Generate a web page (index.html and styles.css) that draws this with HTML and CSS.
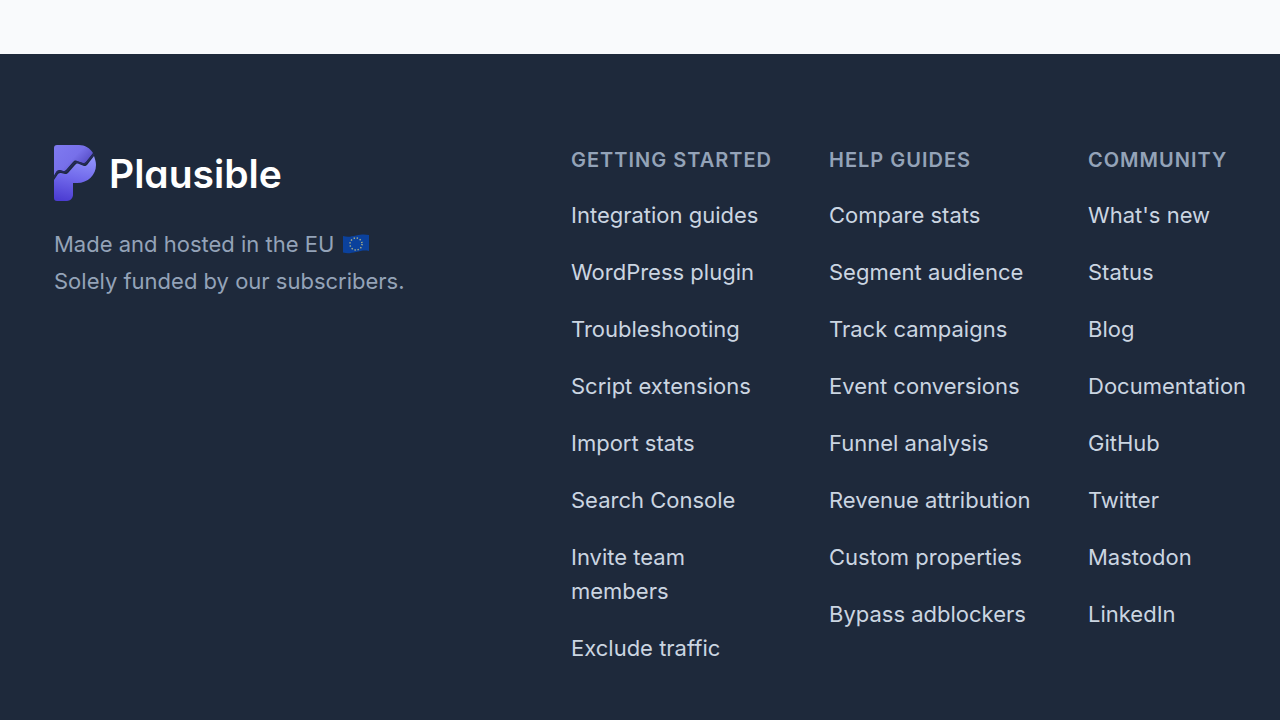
FILE: index.html
```
<!DOCTYPE html>
<html lang="en">
<head>
  <meta charset="UTF-8">
  <meta name="viewport" content="width=device-width, initial-scale=1.0">
  <title>Plausible</title>
  <link rel="stylesheet" href="styles.css">
</head>
<body>
  <footer class="footer">
    <div class="brand">
      <a class="logo" href="#">
        <svg class="logo_mark" viewBox="0 0 42 56" aria-hidden="true">
          <defs>
            <linearGradient id="top" x1="0" y1="0" x2="1" y2="0.8">
              <stop offset="0" stop-color="#7f7af0"/>
              <stop offset="0.5" stop-color="#7770ea"/>
              <stop offset="1" stop-color="#4338b0"/>
            </linearGradient>
            <linearGradient id="bottom" x1="0.5" y1="0" x2="0.3" y2="1">
              <stop offset="0" stop-color="#8f90fa"/>
              <stop offset="0.5" stop-color="#6f67ea"/>
              <stop offset="1" stop-color="#4c3dd2"/>
            </linearGradient>
          </defs>
          <path fill="url(#top)" d="M0 31V3a3 3 0 0 1 3-3h22c6 0 11 3 14 8l-7 9c-1 1-2 1-3 1l-6-2c-2-1-3 0-4 1l-7 8c-1 1-2 1-3 1l-3-1c-1 0-2 0-3 1z"/>
          <path fill="url(#bottom)" d="M0 35l4-6c1-1 2-1 3-1l4 1c1 0 2 0 3-1l7-8c1-1 2-2 4-1l5 2c1 0 2 0 3-1l7-9c1 3 2 6 2 9 0 10-8 18-19 18h-4v12c0 3-3 6-6 6H3a3 3 0 0 1-3-3z"/>
          <path fill="none" stroke="#252a5c" stroke-width="1.6" stroke-linejoin="round" d="M0 32l3-5c1-1 2-1 3-1l4 1c1 0 2 0 3-1l7-8c1-1 2-1 3-1l6 2c1 0 2 0 3-1l8-9"/>
        </svg>
        <span class="logo_text">Plausible</span>
      </a>
      <p class="tagline">
        Made and hosted in the EU
        <svg class="flag" viewBox="0 0 26 20" role="img" aria-label="EU flag">
          <path fill="#0b419c" d="M0 2c5 1.5 8 .5 13-.5S21 0 26 1v16c-5-1-8 0-13 1s-8 2-13 .5z"/>
          <circle cx="13" cy="10" r="6" fill="none" stroke="#a9ae86" stroke-width="1.5" stroke-dasharray="1.3 1.84"/>
        </svg>
        <br>
        Solely funded by our subscribers.
      </p>
    </div>
    <nav class="column" aria-labelledby="started">
      <h4 id="started">Getting started</h4>
      <ul>
        <li><a href="#">Integration guides</a></li>
        <li><a href="#">WordPress plugin</a></li>
        <li><a href="#">Troubleshooting</a></li>
        <li><a href="#">Script extensions</a></li>
        <li><a href="#">Import stats</a></li>
        <li><a href="#">Search Console</a></li>
        <li><a href="#">Invite team members</a></li>
        <li><a href="#">Exclude traffic</a></li>
      </ul>
    </nav>
    <nav class="column" aria-labelledby="help">
      <h4 id="help">Help guides</h4>
      <ul>
        <li><a href="#">Compare stats</a></li>
        <li><a href="#">Segment audience</a></li>
        <li><a href="#">Track campaigns</a></li>
        <li><a href="#">Event conversions</a></li>
        <li><a href="#">Funnel analysis</a></li>
        <li><a href="#">Revenue attribution</a></li>
        <li><a href="#">Custom properties</a></li>
        <li><a href="#">Bypass adblockers</a></li>
      </ul>
    </nav>
    <nav class="column" aria-labelledby="community">
      <h4 id="community">Community</h4>
      <ul>
        <li><a href="#">What's new</a></li>
        <li><a href="#">Status</a></li>
        <li><a href="#">Blog</a></li>
        <li><a href="#">Documentation</a></li>
        <li><a href="#">GitHub</a></li>
        <li><a href="#">Twitter</a></li>
        <li><a href="#">Mastodon</a></li>
        <li><a href="#">LinkedIn</a></li>
      </ul>
    </nav>
  </footer>
</body>
</html>
```
FILE: styles.css
```
* {
  margin: 0;
  padding: 0;
  box-sizing: border-box;
}
body {
  padding-top: 54px;
  background-color: #f9fafc;
  font-family: Inter, "Liberation Sans", sans-serif;
  font-size: 22px;
}
a {
  color: inherit;
  text-decoration: none;
}
.footer {
  display: grid;
  grid-template-columns: 471fr 212fr 213fr 192fr;
  column-gap: 46px;
  min-height: calc(100vh - 54px);
  padding: 91px 0 54px 54px;
  background-color: #1e293b;
}
.logo {
  display: flex;
  align-items: center;
  gap: 13px;
  color: #fff;
}
.logo_mark {
  width: 42px;
  height: 56px;
}
.logo_text {
  font-size: 39px;
  font-weight: 600;
  font-feature-settings: "cv11";
}
.tagline {
  margin-top: 25px;
  line-height: 37px;
  color: #94a3b8;
}
.flag {
  width: 26px;
  height: 20px;
  margin-left: 2px;
  vertical-align: -2px;
}
.column h4 {
  margin-bottom: 23px;
  font-size: 20px;
  font-weight: 600;
  line-height: 30px;
  letter-spacing: 1px;
  text-transform: uppercase;
  color: #94a3b8;
}
.column ul {
  list-style: none;
}
.column li {
  margin-bottom: 23px;
  line-height: 34px;
  color: #cbd5e1;
}
.column a:hover {
  color: #fff;
}
```
